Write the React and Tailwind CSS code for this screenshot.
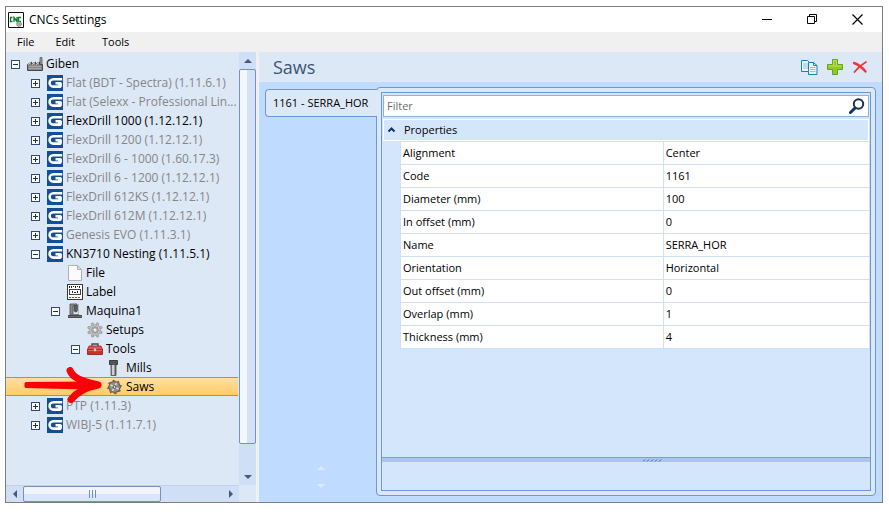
import { useState } from 'react';

const TREE = [
  { label: 'Giben', level: 0, icon: 'factory', state: 'open', active: true },
  { label: 'Flat (BDT - Spectra) (1.11.6.1)', level: 1, icon: 'giben', state: 'closed' },
  { label: 'Flat (Selexx - Professional Lin...', level: 1, icon: 'giben', state: 'closed' },
  { label: 'FlexDrill 1000 (1.12.12.1)', level: 1, icon: 'giben', state: 'closed', active: true },
  { label: 'FlexDrill 1200 (1.12.12.1)', level: 1, icon: 'giben', state: 'closed' },
  { label: 'FlexDrill 6 - 1000 (1.60.17.3)', level: 1, icon: 'giben', state: 'closed' },
  { label: 'FlexDrill 6 - 1200 (1.12.12.1)', level: 1, icon: 'giben', state: 'closed' },
  { label: 'FlexDrill 612KS (1.12.12.1)', level: 1, icon: 'giben', state: 'closed' },
  { label: 'FlexDrill 612M (1.12.12.1)', level: 1, icon: 'giben', state: 'closed' },
  { label: 'Genesis EVO (1.11.3.1)', level: 1, icon: 'giben', state: 'closed' },
  { label: 'KN3710 Nesting (1.11.5.1)', level: 1, icon: 'giben', state: 'open', active: true },
  { label: 'File', level: 2, icon: 'file', active: true },
  { label: 'Label', level: 2, icon: 'label', active: true },
  { label: 'Maquina1', level: 2, icon: 'machine', state: 'open', active: true },
  { label: 'Setups', level: 3, icon: 'gear', active: true },
  { label: 'Tools', level: 3, icon: 'toolbox', state: 'open', active: true },
  { label: 'Mills', level: 4, icon: 'mill', active: true },
  { label: 'Saws', level: 4, icon: 'saw', active: true },
  { label: 'PTP (1.11.3)', level: 1, icon: 'giben', state: 'closed' },
  { label: 'WIBJ-5 (1.11.7.1)', level: 1, icon: 'giben', state: 'closed' },
];

const PROPERTIES = [
  ['Alignment', 'Center'],
  ['Code', '1161'],
  ['Diameter (mm)', '100'],
  ['In offset (mm)', '0'],
  ['Name', 'SERRA_HOR'],
  ['Orientation', 'Horizontal'],
  ['Out offset (mm)', '0'],
  ['Overlap (mm)', '1'],
  ['Thickness (mm)', '4'],
];

const INDENT = ['pl-[5px]', 'pl-[25px]', 'pl-[45px]', 'pl-[65px]', 'pl-[85px]'];

const GEAR_ANGLES = [0, 45, 90, 135, 180, 225, 270, 315];

function NodeIcon({ name }) {
  const props = { width: 16, height: 16, viewBox: '0 0 16 16', className: 'shrink-0', 'aria-hidden': true };
  switch (name) {
    case 'factory':
      return (
        <svg {...props}>
          <path d="M13 9V1.500h2V9z" fill="#9b9b9b" stroke="#5c5c5c" strokeWidth=".8" />
          <path d="M.5 14.500V8.500L4.500 6v2L8.500 6v2L12.500 6v2.500h3v6z" fill="#868686" stroke="#484848" />
          <path d="M1 8.500l3-2M5 8.500l3-2M9 8.500l3-2" stroke="#cfcfcf" />
          <path d="M2 10.500h12M2 12.500h12" stroke="#b0b0b0" strokeWidth=".8" />
        </svg>
      );
    case 'giben':
      return (
        <svg {...props}>
          <path d="M0 0h16v16H0z" fill="#134f96" />
          <path d="M15.200 4.200H6.500C1.300 4.200 1.300 11.600 6.500 11.600H13.300V8.300H8.500" fill="none" stroke="#fff" strokeWidth="2.600" strokeLinejoin="round" />
          <path d="M10.500 8h4.300v3.500h-3z" fill="#fff" />
        </svg>
      );
    case 'file':
      return (
        <svg {...props}>
          <path d="M1.500.5h9l4 4v11h-13z" fill="#fbfbfb" stroke="#b0b0b0" />
          <path d="M10.500.5v4h4z" fill="#e4e4e4" stroke="#b0b0b0" />
        </svg>
      );
    case 'label':
      return (
        <svg {...props} shapeRendering="crispEdges">
          <path d="M.5.5h15v15H.5z" fill="#fff" stroke="#3a3a3a" />
          <path d="M2.500 2v2M4.500 2v2M6.500 2v1M8.500 2v2M10.500 2v1M12.500 2v2" stroke="#222" />
          <path d="M2.500 5.500h11v5h-11z" fill="#fff" stroke="#444" />
          <path d="M5 7.500h1M5 8.500h1M7 8.500h2M10 7.500h1M10 8.500h1" stroke="#222" />
          <path d="M2 13.500h12" stroke="#e02020" strokeDasharray="2 1" />
        </svg>
      );
    case 'machine':
      return (
        <svg {...props}>
          <path d="M3 1h7v2H6v9H3z" fill="#8a8a8a" stroke="#4d4d4d" strokeWidth=".8" />
          <path d="M7 2.500h3.500v5L9.500 9H8L7 7.500z" fill="#5c5c5c" stroke="#3f3f3f" strokeWidth=".6" />
          <path d="M11.500 1v11" stroke="#b9b9b9" />
          <path d="M5 11.500h7" stroke="#777" />
          <path d="M1 12h14v3H1z" fill="#4a4a4a" />
          <path d="M1 13.500h14" stroke="#7d7d7d" strokeWidth=".6" />
        </svg>
      );
    case 'gear':
      return (
        <svg {...props}>
          {GEAR_ANGLES.map(a => (
            <rect key={a} x="6.800" y=".5" width="2.400" height="4" rx=".6" fill="#bcbcbc" stroke="#8c8c8c" strokeWidth=".6" transform={`rotate(${a + 22} 8 8)`} />
          ))}
          <circle cx="8" cy="8" r="5.300" fill="#c6c6c6" stroke="#909090" strokeWidth=".5" />
          <circle cx="8" cy="8" r="3.300" fill="#b0b0b0" stroke="#8a8a8a" strokeWidth=".6" />
          <circle cx="8" cy="8" r="2" fill="#eef3fa" stroke="#858585" strokeWidth=".6" />
        </svg>
      );
    case 'toolbox':
      return (
        <svg {...props}>
          <path d="M5 5V3h6v2" fill="none" stroke="#4d4d4d" strokeWidth="1.400" />
          <path d="M2 5h12l1.500 3.500H.5z" fill="#e2574f" stroke="#a8201c" strokeWidth=".8" />
          <path d="M.5 8.500h15v5H.5z" fill="#cf2e29" stroke="#921713" strokeWidth=".8" />
          <path d="M1 9.300h14" stroke="#ee8a84" strokeWidth=".8" />
          <path d="M6.800 7h2.400v3.500H6.800z" fill="#f0e6e6" stroke="#8c5553" strokeWidth=".6" />
        </svg>
      );
    case 'mill':
      return (
        <svg {...props}>
          <defs>
            <linearGradient id="shank">
              <stop offset="0" stopColor="#666" />
              <stop offset=".4" stopColor="#eee" />
              <stop offset="1" stopColor="#444" />
            </linearGradient>
          </defs>
          <path d="M2.500.5h8v4h-8z" fill="#555" stroke="#3c3c3c" />
          <path d="M4 4.500h5v11H4z" fill="url(#shank)" stroke="#484848" strokeWidth=".8" />
        </svg>
      );
    case 'saw':
      return (
        <svg {...props}>
          {GEAR_ANGLES.map(a => (
            <path key={a} d="M5.500 5L6 1l3.500 1.800L8.500 4z" fill="#777" stroke="#3c3c3c" strokeWidth=".6" transform={`rotate(${a} 7.500 8)`} />
          ))}
          <circle cx="7.500" cy="8" r="4.800" fill="#8e8e8e" />
          <path d="M7.500 8L3.500 6M7.500 8l2-4M7.500 8l4 2M7.500 8l-2 4" stroke="#dadada" strokeWidth="1.600" />
          <circle cx="7.500" cy="8" r="1.500" fill="#f9dc95" stroke="#3c3c3c" strokeWidth=".9" />
        </svg>
      );
    default:
      return null;
  }
}

function Expander({ state }) {
  if (!state) return <span className="w-[9px] shrink-0" />;
  return (
    <button className="flex shrink-0" aria-label={state === 'open' ? 'Collapse' : 'Expand'}>
      <svg width="9" height="9" viewBox="0 0 9 9" shapeRendering="crispEdges">
        <path d="M.5.5h8v8h-8z" fill="#fff" stroke="#2e4a7c" />
        <path d={state === 'open' ? 'M2 4.500h5' : 'M2 4.500h5M4.500 2v5'} stroke="#1c2f55" />
      </svg>
    </button>
  );
}

// red pointer drawn over the selected row
function Pointer() {
  return (
    <svg
      className="absolute left-[17px] -top-[11px] z-10 pointer-events-none"
      width="80"
      height="38"
      viewBox="0 0 80 38"
      fill="#fb0007"
      stroke="#fb0007"
      strokeLinecap="round"
      strokeLinejoin="round"
      aria-hidden="true"
    >
      <path d="M3 16.500L62 16v5L3 19.500z" strokeWidth="3" />
      <path d="M47 3.500C50 12 62 14.500 75 18 62 20.500 54 25 48 32.500" fill="none" strokeWidth="7" />
      <path d="M54 12l21 6-18 6z" />
    </svg>
  );
}

function TreeNode({ node, selected, onSelect }) {
  return (
    <li
      role="treeitem"
      aria-selected={selected}
      className={`relative flex items-center h-[19px] ${INDENT[node.level]} ${
        selected ? 'border-y border-[#ef7d1a] bg-linear-to-b from-[#ffe0a0] to-[#ffcb66]' : 'pt-px'
      }`}
    >
      <Expander state={node.state} />
      <button
        onClick={onSelect}
        className={`flex items-center gap-[3px] ml-[7px] whitespace-nowrap ${node.active ? 'text-black' : 'text-[#868686]'}`}
      >
        <NodeIcon name={node.icon} />
        <span className="leading-4">{node.label}</span>
      </button>
      {selected && <Pointer />}
    </li>
  );
}

function Arrow({ d, label, className }) {
  return (
    <button aria-label={label} className={`flex items-center justify-center shrink-0 ${className}`}>
      <svg width="8" height="8" viewBox="0 0 8 8">
        <path d={d} fill="currentColor" />
      </svg>
    </button>
  );
}

function Sidebar() {
  const [selected, setSelected] = useState('Saws');
  return (
    <aside className="flex flex-col w-[250px] shrink-0 bg-[#dde8f6]">
      <div className="flex flex-1 min-h-0">
        <ul role="tree" className="flex-1 min-w-0 pt-0.5 mr-px text-xs">
          {TREE.map(node => (
            <TreeNode key={node.label} node={node} selected={node.label === selected} onSelect={() => setSelected(node.label)} />
          ))}
        </ul>
        <div className="flex flex-col w-[17px] shrink-0 bg-[#cfdff5] text-[#46597b]">
          <Arrow label="Scroll up" d="M0 6l4-4 4 4z" className="h-[17px]" />
          <div className="h-[375px] rounded-xs border border-[#7391c4] bg-linear-to-r from-[#f3f7fe] from-50% to-[#d4e1f7] to-50%" />
          <div className="flex-1" />
          <Arrow label="Scroll down" d="M0 2h8L4 6z" className="h-[17px]" />
        </div>
      </div>
      <div className="flex h-[17px] shrink-0 text-[#46597b]">
        <div className="flex flex-1 bg-[#cfdff5] border-t border-[#c0d2ec]">
          <Arrow label="Scroll left" d="M6 0v8L2 4z" className="w-[17px]" />
          <div className="flex items-center justify-center gap-0.5 w-[138px] rounded-xs border border-[#7391c4] bg-linear-to-b from-[#f0f5fd] from-50% to-[#d9e5f8] to-50%">
            <span className="w-px h-2 bg-[#7391c4]" />
            <span className="w-px h-2 bg-[#7391c4]" />
            <span className="w-px h-2 bg-[#7391c4]" />
          </div>
          <div className="flex-1" />
          <Arrow label="Scroll right" d="M2 0l4 4-4 4z" className="w-[17px]" />
        </div>
        <div className="w-[17px]" />
      </div>
    </aside>
  );
}

function TitleBar() {
  return (
    <header className="flex items-center h-[25px] shrink-0 pl-0.5 pr-[19px] bg-white">
      <svg width="16" height="16" viewBox="0 0 16 16" aria-hidden="true">
        <path d="M.5.5h15v15H.5z" fill="#fff" stroke="#111" />
        <path d="M4.500 5.500h-2v4h2M6 10V5.500l3 4V5M13 5.500h-2.500v4H13" fill="none" stroke="#0a7a28" strokeWidth="1.300" />
        <circle cx="11" cy="12" r="2.500" fill="#aaa" stroke="#777" strokeDasharray="1 1" />
      </svg>
      <h1 className="ml-[5px] text-xs text-black">CNCs Settings</h1>
      <div className="flex items-center gap-[34px] ml-auto">
        <button aria-label="Minimize">
          <svg width="11" height="11" viewBox="0 0 11 11"><path d="M0 5.500h10" stroke="#000" /></svg>
        </button>
        <button aria-label="Restore">
          <svg width="11" height="11" viewBox="0 0 11 11" fill="none" stroke="#000">
            <path d="M.5 2.500h7v7h-7zM2.500 2.500v-2h7v7h-2" />
          </svg>
        </button>
        <button aria-label="Close">
          <svg width="11" height="11" viewBox="0 0 11 11"><path d="M.5.5l10 10M10.500.5l-10 10" stroke="#000" strokeWidth="1.200" /></svg>
        </button>
      </div>
    </header>
  );
}

function Toolbar() {
  return (
    <div className="flex items-center h-[30px] shrink-0 px-3.5 bg-[#dde8f6]">
      <h2 className="text-lg text-[#3b5578]">Saws</h2>
      <div className="flex items-center gap-[9px] ml-auto">
        <button aria-label="Copy">
          <svg width="17" height="17" viewBox="0 0 17 17">
            <path d="M.5 1.500h6l3 3v8h-9z" fill="#e8f6fd" stroke="#1b7fb5" />
            <path d="M2 5h5M2 7h5M2 9h5" stroke="#8cc4e2" />
            <path d="M7.500 3.500h5l3.500 3v9H7.500z" fill="#e8f6fd" stroke="#1b7fb5" />
            <path d="M12.500 3.500v3H16" fill="none" stroke="#1b7fb5" />
            <path d="M9 8.500h5.500M9 10.500h5.500M9 12.500h5.500" stroke="#8cc4e2" />
          </svg>
        </button>
        <button aria-label="Add">
          <svg width="16" height="16" viewBox="0 0 16 16">
            <path d="M5.500.5h5v5h5v5h-5v5h-5v-5h-5v-5h5z" fill="#8cc929" stroke="#6ba01c" />
            <path d="M6.500 6.500v-5h3v5M1.500 7h13" fill="none" stroke="#b9e261" />
          </svg>
        </button>
        <button aria-label="Delete">
          <svg width="16" height="16" viewBox="0 0 16 16" fill="none" strokeLinecap="round">
            <path d="M2 4c4.500 1.500 8.500 5 11.500 8.500" stroke="#f5333a" strokeWidth="2.400" />
            <path d="M14 3C9.500 5.500 5.500 9 2.500 13" stroke="#f5333a" strokeWidth="1.800" />
          </svg>
        </button>
      </div>
    </div>
  );
}

function PropertyGrid() {
  const [filter, setFilter] = useState('');
  const rows = PROPERTIES.filter(([name]) => name.toLowerCase().includes(filter.toLowerCase()));
  return (
    <div className="flex flex-col flex-1 min-w-0 border border-[#6b98d8] bg-[#d4e6fc] text-[11px] text-black">
      <div className="flex items-center h-[22px] shrink-0 mt-0.5 mx-px pl-[3px] pr-[3px] border border-[#8fb2e4] bg-white">
        <input
          type="text"
          aria-label="Filter"
          placeholder="Filter"
          value={filter}
          onChange={e => setFilter(e.target.value)}
          className="flex-1 min-w-0 outline-none placeholder:text-[#6d6d6d]"
        />
        <button aria-label="Search">
          <svg width="16" height="16" viewBox="0 0 16 16" fill="none" stroke="#17315f">
            <circle cx="9.500" cy="6" r="4.700" strokeWidth="2" />
            <path d="M6 10l-4.500 4.500" strokeWidth="3" strokeLinecap="round" />
          </svg>
        </button>
      </div>
      <button className="flex items-center h-[22px] shrink-0 mt-0.5 mx-px pl-1 border border-white text-left" aria-expanded="true">
        <svg width="7" height="6" viewBox="0 0 7 6" aria-hidden="true">
          <path d="M.5 4.500l3-3 3 3" fill="none" stroke="#12306b" strokeWidth="2" />
        </svg>
        <span className="ml-[9px]">Properties</span>
      </button>
      <div className="pl-[18px]">
        <table className="w-full table-fixed border-collapse bg-white text-left">
          <tbody>
            {rows.map(([name, value]) => (
              <tr key={name} className="h-[23px]">
                <th scope="row" className="w-[56%] py-0 px-0.5 border border-[#cfe0f7] font-normal leading-4">{name}</th>
                <td className="py-0 px-0.5 border border-[#cfe0f7] leading-4">{value}</td>
              </tr>
            ))}
          </tbody>
        </table>
      </div>
      <div className="flex-1" />
      <div className="flex items-center justify-center h-[5px] shrink-0 border-t border-[#7b9fcf] bg-[#adc6e8] pl-[54px]">
        <svg width="20" height="3" viewBox="0 0 20 3" aria-hidden="true">
          <path d="M0 2.500l2-2M4 2.500l2-2M8 2.500l2-2M12 2.500l2-2M16 2.500l2-2" stroke="#2b62b5" />
        </svg>
      </div>
      <div className="h-7 shrink-0" />
    </div>
  );
}

export default function App() {
  return (
    <div className="h-screen bg-white pt-1.5 pb-3 pl-[5px] pr-1.5 font-['Open_Sans','Noto_Sans',sans-serif]">
      <div className="flex flex-col h-full border border-[#7f7f7f] overflow-hidden">
        <TitleBar />
        <nav className="flex items-center gap-[21px] h-5 shrink-0 pl-[11px] bg-[#f0f0f0] text-[11px] text-black">
          <button>File</button>
          <button>Edit</button>
          <button className="ml-1.5">Tools</button>
        </nav>
        <div className="flex flex-1 min-h-0 bg-[#f0f0f0]">
          <Sidebar />
          <main className="flex flex-col flex-1 min-w-0 ml-[3px] bg-[#bfdbff]">
            <Toolbar />
            <div className="flex flex-1 min-h-0 pt-[5px] px-1.5 pb-1.5">
              <div className="flex flex-col w-[111px] shrink-0" role="tablist">
                <button
                  role="tab"
                  aria-selected="true"
                  className="relative z-10 h-7 mt-0.5 -mr-px pl-[7px] rounded-l-sm border border-r-0 border-[#6b98d8] bg-[#dde8f6] text-[11px] text-black text-left whitespace-nowrap"
                >
                  1161 - SERRA_HOR
                </button>
                <div className="flex flex-col items-center gap-2.5 mt-auto pb-1.5 text-[#dfeafb]">
                  <Arrow label="Previous tab" d="M0 6l4-4 4 4z" className="h-2" />
                  <Arrow label="Next tab" d="M0 2h8L4 6z" className="h-2" />
                </div>
              </div>
              <div className="flex flex-1 min-w-0 p-1 rounded-sm border border-[#6b98d8] bg-[#dde8f6]">
                <PropertyGrid />
              </div>
            </div>
          </main>
        </div>
      </div>
    </div>
  );
}
